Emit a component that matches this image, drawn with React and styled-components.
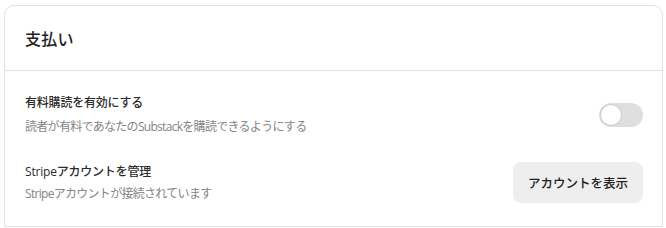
import React from "react";
import styled, { createGlobalStyle } from "styled-components";

const Global = createGlobalStyle`
  html, body { margin: 0; padding: 0; background: #ffffff; }
  body {
    font-family: "Open Sans", "Noto Sans CJK JP", sans-serif;
    -webkit-font-smoothing: antialiased;
  }
  * { box-sizing: border-box; }
`;

const Page = styled.div`
  padding: 5px 3px 0 4px;
`;

const Card = styled.section`
  border: 1px solid #e2e2e2;
  border-radius: 10px 10px 0 0;
  background: #fff;
`;

const Header = styled.header`
  height: 65px;
  display: flex;
  align-items: center;
  padding: 0 20px;
  border-bottom: 1px solid #e2e2e2;
`;

const Title = styled.h2`
  margin: 0;
  font-size: 16px;
  font-weight: 500;
  color: #222;
  letter-spacing: 0.2px;
`;

const Body = styled.div`
  display: flex;
  flex-direction: column;
  gap: 26px;
  padding: 23px 19px 23px 20px;
`;

const Row = styled.div`
  display: flex;
  align-items: center;
  justify-content: space-between;
  min-height: 41px;
`;

const Text = styled.div`
  display: flex;
  flex-direction: column;
  gap: ${(p) => p.$gap}px;
`;

const Label = styled.div`
  font-size: 12px;
  line-height: 18px;
  color: #2b2b2b;
  font-weight: 500;
  letter-spacing: -0.2px;
`;

const Desc = styled.div`
  font-size: 12px;
  line-height: 18px;
  color: #858585;
  letter-spacing: -0.7px;
`;

const Switch = styled.button`
  position: relative;
  width: 44px;
  height: 24px;
  border: none;
  border-radius: 12px;
  background: #dedede;
  padding: 0;
  cursor: pointer;
`;

const Knob = styled.span`
  position: absolute;
  left: 2px;
  top: 2px;
  width: 20px;
  height: 20px;
  border-radius: 50%;
  background: #fff;
  box-shadow: 0 0 0 1px #d0d0d0;
`;

const Button = styled.button`
  height: 41px;
  width: 130px;
  padding: 0;
  border: none;
  border-radius: 8px;
  background: #eeeeee;
  color: #222;
  font-family: inherit;
  font-size: 12.5px;
  font-weight: 500;
  cursor: pointer;
`;

export default function App() {
  return (
    <Page>
      <Global />
      <Card>
        <Header>
          <Title>支払い</Title>
        </Header>
        <Body>
          <Row>
            <Text $gap={6}>
              <Label>有料購読を有効にする</Label>
              <Desc>読者が有料であなたのSubstackを購読できるようにする</Desc>
            </Text>
            <Switch aria-label="有料購読を有効にする">
              <Knob />
            </Switch>
          </Row>
          <Row>
            <Text $gap={4}>
              <Label>Stripeアカウントを管理</Label>
              <Desc>Stripeアカウントが接続されています</Desc>
            </Text>
            <Button>アカウントを表示</Button>
          </Row>
        </Body>
      </Card>
    </Page>
  );
}
